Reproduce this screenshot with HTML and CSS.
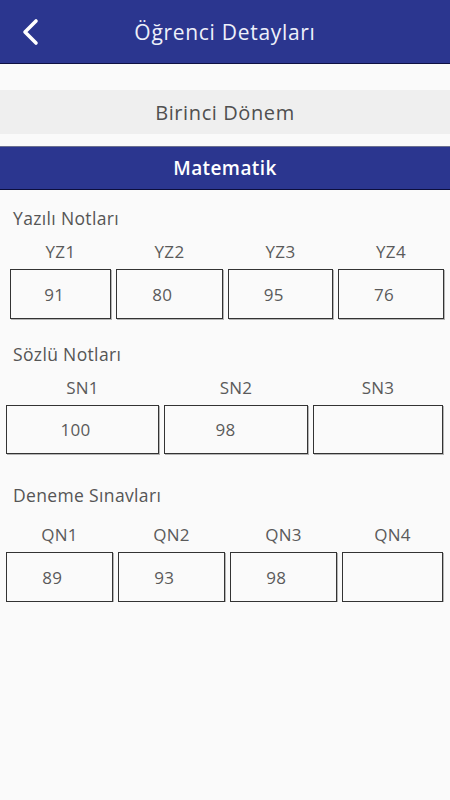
FILE: index.html
```html
<!DOCTYPE html>
<html lang="tr">
<head>
<meta charset="utf-8">
<link rel="stylesheet" href="styles.css">
</head>
<body>
<header class="appbar">
  <div class="appbar-left">
    <svg class="back" width="20" height="28" viewBox="0 0 20 28">
      <polyline points="15,3 4,14 15,25" fill="none" stroke="#ffffff" stroke-width="3.6" stroke-linecap="round" stroke-linejoin="round"/>
    </svg>
  </div>
  <h1 class="title">Öğrenci Detayları</h1>
  <div></div>
</header>

<div class="term">Birinci Dönem</div>
<div class="subject">Matematik</div>

<section class="group g1">
  <div class="group-title">Yazılı Notları</div>
  <div class="grid grid-yz labels">
    <div>YZ1</div><div>YZ2</div><div>YZ3</div><div>YZ4</div>
  </div>
  <div class="grid grid-yz boxes">
    <div class="box">91</div><div class="box">80</div><div class="box">95</div><div class="box">76</div>
  </div>
</section>

<section class="group g2">
  <div class="group-title">Sözlü Notları</div>
  <div class="grid grid-sn labels">
    <div>SN1</div><div>SN2</div><div>SN3</div>
  </div>
  <div class="grid grid-sn boxes">
    <div class="box wide">100</div><div class="box wide">98</div><div class="box wide"></div>
  </div>
</section>

<section class="group g3">
  <div class="group-title">Deneme Sınavları</div>
  <div class="grid grid-qn labels">
    <div>QN1</div><div>QN2</div><div>QN3</div><div>QN4</div>
  </div>
  <div class="grid grid-qn boxes">
    <div class="box">89</div><div class="box">93</div><div class="box">98</div><div class="box"></div>
  </div>
</section>
</body>
</html>
```

FILE: styles.css
```css
* { box-sizing: border-box; }
html, body {
  margin: 0;
  padding: 0;
  background: #fafafa;
  font-family: "Open Sans", "Liberation Sans", sans-serif;
  color: #555555;
}
.appbar {
  height: 64px;
  background: #2b368f;
  border-bottom: 1px solid #0e1142;
  display: grid;
  grid-template-columns: 1fr auto 1fr;
  align-items: center;
}
.appbar-left {
  padding-left: 21px;
  display: flex;
  align-items: center;
}
.back { display: block; margin-top: 1px; }
.title {
  margin: 0;
  font-size: 21px;
  font-weight: 400;
  color: #eef0fa;
  letter-spacing: 0.7px;
}
.term {
  margin-top: 26px;
  height: 44px;
  background: #efefef;
  display: flex;
  align-items: center;
  justify-content: center;
  font-size: 20px;
  color: #505050;
  letter-spacing: 0.6px;
  padding-top: 1px;
}
.subject {
  margin-top: 12px;
  height: 44px;
  background: #2b368f;
  border-top: 1px solid #6b7090;
  border-bottom: 1px solid #0c0e3c;
  display: flex;
  align-items: center;
  justify-content: center;
  font-size: 19px;
  font-weight: 600;
  letter-spacing: 0.4px;
  color: #ffffff;
}
.group-title {
  padding-left: 13px;
  font-size: 17.5px;
  line-height: 24px;
  letter-spacing: 0.35px;
}
.g1 { margin-top: 16px; }
.g2 { margin-top: 23px; }
.g3 { margin-top: 29px; }
.g3 .labels { margin-top: 16px; }
.grid {
  display: grid;
  column-gap: 5px;
  padding-right: 7px;
}
.grid-yz { grid-template-columns: 101px 107px 105px 106px; padding-left: 10px; }
.grid-sn { grid-template-columns: 153px 144px 1fr; padding-left: 6px; }
.grid-qn { grid-template-columns: 107px 107px 107px 1fr; padding-left: 6px; }
.labels {
  margin-top: 10px;
  font-size: 17px;
  line-height: 24px;
  text-align: center;
  letter-spacing: 0.3px;
  color: #5a5a5a;
}
.boxes { margin-top: 5px; }
.box {
  height: 50px;
  border: 1px solid #333333;
  box-shadow: 1px 1px 0 #b5b5b5;
  display: flex;
  align-items: center;
  padding-left: 33%;
  font-size: 17px;
  letter-spacing: 0.3px;
  color: #5a5a5a;
}
.box.wide { padding-left: 35%; }
.grid-sn .box { height: 49px; }
```
